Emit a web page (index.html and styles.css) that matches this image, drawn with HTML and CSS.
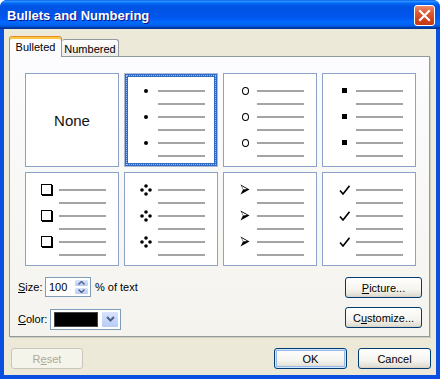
FILE: index.html
```html
<!DOCTYPE html>
<html>
<head>
  <title>Bullets and Numbering</title>
  <link rel="stylesheet" href="styles.css">
</head>
<body>
  <div class="window">
    <div class="titlebar">
      <span class="title">Bullets and Numbering</span>
      <span class="close">
        <svg width="13" height="13" viewBox="0 0 13 13"><path d="M2 2 L11 11 M11 2 L2 11" stroke="#fff" stroke-width="2.2" stroke-linecap="square"/></svg>
      </span>
    </div>

    <div class="client">
      <div class="tabs">
        <div class="tab active">Bulleted</div>
        <div class="tab">Numbered</div>
      </div>

      <div class="panel">
        <div class="grid">
          <div class="cell none">None</div>

          <div class="cell selected">
            <div class="item"><span class="mark"><i class="dot"></i></span><span class="line"></span></div>
            <div class="item"><span class="line indent"></span></div>
            <div class="item"><span class="mark"><i class="dot"></i></span><span class="line"></span></div>
            <div class="item"><span class="line indent"></span></div>
            <div class="item"><span class="mark"><i class="dot"></i></span><span class="line"></span></div>
            <div class="item"><span class="line indent"></span></div>
          </div>

          <div class="cell">
            <div class="item"><span class="mark"><i class="ring"></i></span><span class="line"></span></div>
            <div class="item"><span class="line indent"></span></div>
            <div class="item"><span class="mark"><i class="ring"></i></span><span class="line"></span></div>
            <div class="item"><span class="line indent"></span></div>
            <div class="item"><span class="mark"><i class="ring"></i></span><span class="line"></span></div>
            <div class="item"><span class="line indent"></span></div>
          </div>

          <div class="cell">
            <div class="item"><span class="mark"><i class="square"></i></span><span class="line"></span></div>
            <div class="item"><span class="line indent"></span></div>
            <div class="item"><span class="mark"><i class="square"></i></span><span class="line"></span></div>
            <div class="item"><span class="line indent"></span></div>
            <div class="item"><span class="mark"><i class="square"></i></span><span class="line"></span></div>
            <div class="item"><span class="line indent"></span></div>
          </div>

          <div class="cell">
            <div class="item"><span class="mark"><i class="box"></i></span><span class="line"></span></div>
            <div class="item"><span class="line indent"></span></div>
            <div class="item"><span class="mark"><i class="box"></i></span><span class="line"></span></div>
            <div class="item"><span class="line indent"></span></div>
            <div class="item"><span class="mark"><i class="box"></i></span><span class="line"></span></div>
            <div class="item"><span class="line indent"></span></div>
          </div>

          <div class="cell">
            <div class="item"><span class="mark"><svg width="12" height="12" viewBox="0 0 12 12"><circle cx="6" cy="2" r="1.8"/><circle cx="2" cy="6" r="1.8"/><circle cx="10" cy="6" r="1.8"/><circle cx="6" cy="10" r="1.8"/></svg></span><span class="line"></span></div>
            <div class="item"><span class="line indent"></span></div>
            <div class="item"><span class="mark"><svg width="12" height="12" viewBox="0 0 12 12"><circle cx="6" cy="2" r="1.8"/><circle cx="2" cy="6" r="1.8"/><circle cx="10" cy="6" r="1.8"/><circle cx="6" cy="10" r="1.8"/></svg></span><span class="line"></span></div>
            <div class="item"><span class="line indent"></span></div>
            <div class="item"><span class="mark"><svg width="12" height="12" viewBox="0 0 12 12"><circle cx="6" cy="2" r="1.8"/><circle cx="2" cy="6" r="1.8"/><circle cx="10" cy="6" r="1.8"/><circle cx="6" cy="10" r="1.8"/></svg></span><span class="line"></span></div>
            <div class="item"><span class="line indent"></span></div>
          </div>

          <div class="cell">
            <div class="item"><span class="mark"><svg width="10" height="11" viewBox="0 0 10 11"><path d="M0.5 0.5 L9.5 5.5 L0.5 10.5 L3 5.5 Z"/><path d="M1.5 2 L7 5 L3.5 5.5 Z" fill="#fff"/></svg></span><span class="line"></span></div>
            <div class="item"><span class="line indent"></span></div>
            <div class="item"><span class="mark"><svg width="10" height="11" viewBox="0 0 10 11"><path d="M0.5 0.5 L9.5 5.5 L0.5 10.5 L3 5.5 Z"/><path d="M1.5 2 L7 5 L3.5 5.5 Z" fill="#fff"/></svg></span><span class="line"></span></div>
            <div class="item"><span class="line indent"></span></div>
            <div class="item"><span class="mark"><svg width="10" height="11" viewBox="0 0 10 11"><path d="M0.5 0.5 L9.5 5.5 L0.5 10.5 L3 5.5 Z"/><path d="M1.5 2 L7 5 L3.5 5.5 Z" fill="#fff"/></svg></span><span class="line"></span></div>
            <div class="item"><span class="line indent"></span></div>
          </div>

          <div class="cell">
            <div class="item"><span class="mark"><svg width="11" height="10" viewBox="0 0 11 10"><path d="M1 5.5 L4 9 L10.5 0.8" fill="none" stroke="#000" stroke-width="1.6"/></svg></span><span class="line"></span></div>
            <div class="item"><span class="line indent"></span></div>
            <div class="item"><span class="mark"><svg width="11" height="10" viewBox="0 0 11 10"><path d="M1 5.5 L4 9 L10.5 0.8" fill="none" stroke="#000" stroke-width="1.6"/></svg></span><span class="line"></span></div>
            <div class="item"><span class="line indent"></span></div>
            <div class="item"><span class="mark"><svg width="11" height="10" viewBox="0 0 11 10"><path d="M1 5.5 L4 9 L10.5 0.8" fill="none" stroke="#000" stroke-width="1.6"/></svg></span><span class="line"></span></div>
            <div class="item"><span class="line indent"></span></div>
          </div>
        </div>

        <div class="options">
          <div class="fields">
            <div class="field">
              <label class="size-label"><u>S</u>ize:</label>
              <div class="spin">
                <span class="value">100</span>
                <span class="arrows">
                  <span class="arrow"><svg width="7" height="4" viewBox="0 0 7 4"><path d="M0.5 3.5 L3.5 0.5 L6.5 3.5" fill="none" stroke="#4d6185" stroke-width="1.4"/></svg></span>
                  <span class="arrow"><svg width="7" height="4" viewBox="0 0 7 4"><path d="M0.5 0.5 L3.5 3.5 L6.5 0.5" fill="none" stroke="#4d6185" stroke-width="1.4"/></svg></span>
                </span>
              </div>
              <span class="suffix">% of text</span>
            </div>
            <div class="field">
              <label class="color-label"><u>C</u>olor:</label>
              <div class="combo">
                <span class="swatch"></span>
                <span class="drop"><svg width="9" height="6" viewBox="0 0 9 6"><path d="M1 1 L4.5 4.5 L8 1" fill="none" stroke="#4d6185" stroke-width="2"/></svg></span>
              </div>
            </div>
          </div>
          <div class="side">
            <button class="btn wide"><u>P</u>icture...</button>
            <button class="btn wide">C<u>u</u>stomize...</button>
          </div>
        </div>
      </div>

      <div class="footer">
        <button class="btn" disabled>R<u>e</u>set</button>
        <div class="actions">
          <button class="btn default">OK</button>
          <button class="btn">Cancel</button>
        </div>
      </div>
    </div>
  </div>
</body>
</html>
```

FILE: styles.css
```css
body {
  margin: 0;
  background: #fff;
  font-family: "Liberation Sans", Arial, sans-serif;
  font-size: 11px;
  color: #000;
}

.window {
  width: 440px;
  height: 379px;
  display: flex;
  flex-direction: column;
  background: #0a4fe0;
  border-radius: 7px 7px 0 0;
  overflow: hidden;
}

.titlebar {
  height: 29px;
  flex-shrink: 0;
  display: flex;
  align-items: center;
  justify-content: space-between;
  padding: 0 5px 0 7px;
  background: linear-gradient(to bottom, #0058ee 0%, #3593ff 4%, #288eff 6%, #127dff 8%, #036ffc 10%, #0262ee 14%, #0057e5 20%, #0054e3 24%, #0055eb 56%, #005bf5 66%, #026afe 76%, #0062ef 86%, #0052d6 92%, #0040ab 94%, #003092 100%);
}

.title {
  color: #fff;
  font-weight: bold;
  font-size: 13px;
  text-shadow: 1px 1px 0 #0f1089;
  margin-top: 1px;
}

.close {
  width: 19px;
  height: 19px;
  margin-top: 2px;
  border: 1px solid #fff;
  border-radius: 3px;
  background: linear-gradient(to bottom, #eb8b6c 0%, #df5a35 35%, #d2421c 70%, #c43a16 100%);
  display: flex;
  align-items: center;
  justify-content: center;
}

.client {
  flex: 1;
  margin: 0 4px 4px;
  padding: 7px 6px 0 5px;
  background: #ece9d8;
}

/* tabs */
.tabs {
  display: flex;
  align-items: flex-end;
  height: 20px;
}

.tab {
  box-sizing: border-box;
  border: 1px solid #919b9c;
  border-bottom: none;
  border-radius: 3px 3px 0 0;
  text-align: center;
}

.tab.active {
  width: 53px;
  height: 21px;
  margin-bottom: -1px;
  padding-top: 4px;
  border-top: 1px solid #e68b2c;
  box-shadow: inset 0 2px 0 #ffc83c;
  background: #fcfcfe;
  position: relative;
  z-index: 1;
}

.tab:not(.active) {
  width: 57px;
  height: 17px;
  padding-top: 3px;
  border-left: none;
  background: linear-gradient(to bottom, #fff, #ecebe6);
}

.panel {
  border: 1px solid #919b9c;
  box-shadow: 1px 1px 0 #d0cebf;
  background: linear-gradient(to bottom, #fcfcfe, #f4f3ee);
  padding: 16px 7px 7px 8px;
}

/* bullet gallery */
.grid {
  display: grid;
  grid-template-columns: repeat(4, 94px);
  grid-auto-rows: 94px;
  gap: 5px;
  margin-left: 7px;
}

.cell {
  box-sizing: border-box;
  border: 1px solid #8da2c9;
  background: #fff;
  padding-top: 10px;
  display: flex;
  flex-direction: column;
}

.cell.none {
  padding: 0;
  align-items: center;
  justify-content: center;
  font-size: 15px;
  color: #111;
}

.cell.selected {
  border-color: #a7b8da;
  box-shadow: inset 0 0 0 3px #316ac5;
  outline: 1px dotted #a9c0ea;
  outline-offset: -3px;
}

.item {
  height: 13px;
  display: flex;
  align-items: center;
}

.mark {
  width: 24px;
  margin-left: 9px;
  display: flex;
  justify-content: center;
  align-items: center;
}

.line {
  width: 47px;
  height: 2px;
  background: #a4a4a4;
}

.line.indent {
  margin-left: 33px;
}

.dot {
  width: 4px;
  height: 4px;
  border-radius: 50%;
  background: #000;
}

.ring {
  width: 5px;
  height: 6px;
  border: 1px solid #000;
  border-radius: 50%;
}

.square {
  width: 5px;
  height: 5px;
  background: #000;
}

.box {
  width: 9px;
  height: 9px;
  border: 1px solid #000;
  box-shadow: 1px 1px 0 #000;
  margin-right: 1px;
}

/* size / color controls */
.options {
  display: flex;
  justify-content: space-between;
  margin-top: 11px;
}

.fields {
  display: flex;
  flex-direction: column;
  gap: 12px;
}

.field {
  display: flex;
  align-items: center;
  height: 20px;
}

.size-label {
  width: 27px;
}

.color-label {
  width: 32px;
}

.spin {
  box-sizing: border-box;
  width: 46px;
  height: 20px;
  border: 1px solid #7f9db9;
  background: #fff;
  display: flex;
  align-items: center;
  padding: 1px;
}

.value {
  flex: 1;
  padding-left: 2px;
}

.arrows {
  width: 15px;
  height: 100%;
  display: flex;
  flex-direction: column;
}

.arrow {
  flex: 1;
  display: flex;
  align-items: center;
  justify-content: center;
  border: 1px solid #fff;
  border-radius: 2px;
  background: linear-gradient(to bottom, #d9e4fc, #b7cbf6);
}

.suffix {
  margin-left: 4px;
}

.combo {
  box-sizing: border-box;
  width: 71px;
  height: 21px;
  border: 1px solid #7f9db9;
  background: #fff;
  display: flex;
  padding: 1px;
}

.swatch {
  flex: 1;
  margin: 1px 3px 1px 2px;
  background: #000;
  border: 1px solid #444;
}

.drop {
  width: 16px;
  display: flex;
  align-items: center;
  justify-content: center;
  border: 1px solid #fff;
  border-radius: 2px;
  background: linear-gradient(to bottom, #d9e4fc, #b7cbf6);
}

.side {
  display: flex;
  flex-direction: column;
  gap: 9px;
}

/* buttons */
.btn {
  box-sizing: border-box;
  width: 73px;
  height: 21px;
  padding: 0;
  font-family: "Liberation Sans", Arial, sans-serif;
  font-size: 11px;
  color: #000;
  border: 1px solid #003c74;
  border-radius: 3px;
  background: linear-gradient(to bottom, #fff 0%, #f5f4ef 60%, #e3e0d5 90%, #d6d0c5 100%);
}

.btn.wide {
  width: 77px;
}

.btn.default {
  box-shadow: inset 0 0 0 1px #cee7ff, inset 0 0 0 2px #98b8ea;
}

.btn:disabled {
  width: 72px;
  color: #aca899;
  border-color: #c9c7ba;
  background: #f5f4ea;
}

.footer {
  display: flex;
  justify-content: space-between;
  margin: 11px -1px 0 2px;
}

.actions {
  display: flex;
  gap: 11px;
}
```
